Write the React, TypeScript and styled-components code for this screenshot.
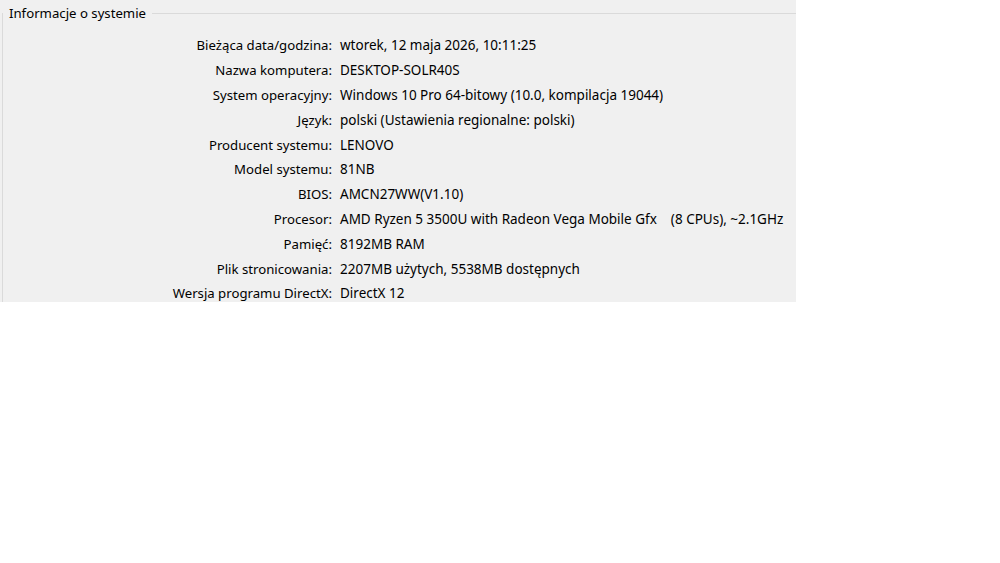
import React from 'react';
import styled, { createGlobalStyle } from 'styled-components';

const GlobalStyle = createGlobalStyle`
  html, body {
    margin: 0;
    padding: 0;
    background: #fff;
  }
  body {
    font-family: 'Noto Sans', 'Open Sans', sans-serif;
    color: #000;
  }
`;

const Panel = styled.div`
  width: 796px;
  height: 302px;
  background: #f0f0f0;
  box-sizing: border-box;
  padding: 0 0 0 2px;
  overflow: hidden;
`;

const GroupBox = styled.fieldset`
  margin: 0;
  padding: 6px 0 0 0;
  height: 100%;
  box-sizing: border-box;
  border: none;
  border-top: 1px solid #dadada;
  border-left: 1px solid #dadada;
`;

const Legend = styled.legend`
  font-size: 13.2px;
  padding: 0 6px 0 6px;
  line-height: 27px;
`;

const InfoGrid = styled.div`
  display: grid;
  grid-template-columns: 329px auto;
  column-gap: 8px;
  grid-auto-rows: 24.8px;
  align-items: center;
  font-size: 13.5px;
`;

const Label = styled.div`
  text-align: right;
  white-space: nowrap;
  font-size: 13.2px;
`;

const Value = styled.div`
  white-space: pre;
`;

const rows: [string, string][] = [
  ['Bieżąca data/godzina:', 'wtorek, 12 maja 2026, 10:11:25'],
  ['Nazwa komputera:', 'DESKTOP-SOLR40S'],
  ['System operacyjny:', 'Windows 10 Pro 64-bitowy (10.0, kompilacja 19044)'],
  ['Język:', 'polski (Ustawienia regionalne: polski)'],
  ['Producent systemu:', 'LENOVO'],
  ['Model systemu:', '81NB'],
  ['BIOS:', 'AMCN27WW(V1.10)'],
  ['Procesor:', 'AMD Ryzen 5 3500U with Radeon Vega Mobile Gfx    (8 CPUs), ~2.1GHz'],
  ['Pamięć:', '8192MB RAM'],
  ['Plik stronicowania:', '2207MB użytych, 5538MB dostępnych'],
  ['Wersja programu DirectX:', 'DirectX 12'],
];

const App: React.FC = () => {
  return (
    <>
      <GlobalStyle />
      <Panel>
        <GroupBox>
          <Legend>Informacje o systemie</Legend>
          <InfoGrid>
            {rows.map(([label, value]) => (
              <React.Fragment key={label}>
                <Label>{label}</Label>
                <Value>{value}</Value>
              </React.Fragment>
            ))}
          </InfoGrid>
        </GroupBox>
      </Panel>
    </>
  );
};

export default App;
